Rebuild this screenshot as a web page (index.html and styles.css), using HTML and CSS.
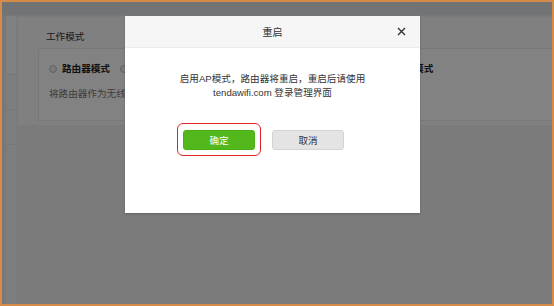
FILE: index.html
```html
<!DOCTYPE html>
<html lang="zh-CN">
<head>
    <meta charset="UTF-8">
    <meta name="viewport" content="width=device-width, initial-scale=1.0">
    <title>工作模式</title>
    <link rel="stylesheet" href="styles.css">
</head>
<body>

    <div class="marco">
        <div class="cabecera"></div>
        <div class="cuerpo">
            <aside class="menu">
                <div class="menu-item activo"></div>
                <div class="menu-item"></div>
                <div class="menu-item"></div>
            </aside>
            <main class="contenido">
                <section class="tarjeta">
                    <h2 class="tarjeta-titulo">工作模式</h2>
                    <div class="modos">
                        <div class="opciones">
                            <label class="opcion"><span class="radio"></span>路由器模式</label>
                            <label class="opcion"><span class="radio"></span>无线中继模式</label>
                            <label class="opcion"><span class="radio"></span>无线AP模式</label>
                        </div>
                        <p class="descripcion">将路由器作为无线AP使用</p>
                    </div>
                </section>
            </main>
        </div>

        <div class="mascara"></div>

        <div class="dialogo">
            <div class="dialogo-cabecera">
                <span class="dialogo-titulo">重启</span>
                <button class="cerrar" aria-label="关闭">
                    <svg width="9" height="9" viewBox="0 0 9 9">
                        <path d="M1 1 L8 8 M8 1 L1 8" stroke="#333" stroke-width="1.4" fill="none"/>
                    </svg>
                </button>
            </div>
            <div class="dialogo-cuerpo">
                <p class="mensaje">启用AP模式，路由器将重启，重启后请使用<br>tendawifi.com 登录管理界面</p>
                <div class="acciones">
                    <span class="resaltado">
                        <button class="boton confirmar">确定</button>
                    </span>
                    <button class="boton cancelar">取消</button>
                </div>
            </div>
        </div>
    </div>

</body>
</html>
```

FILE: styles.css
```css
body {
    margin: 0;
    font-family: "Liberation Sans", Arial, "Noto Sans CJK SC", sans-serif;
    font-size: 9.6px;
    color: #333;
}

.marco {
    position: relative;
    width: 554px;
    height: 306px;
    box-sizing: border-box;
    border: 2px solid #d58c48;
    background-color: #ececec;
    overflow: hidden;
}

.cabecera {
    height: 13px;
    background-color: #dadcde;
    border-bottom: 1px solid #e4e4e4;
}

.cuerpo {
    display: flex;
    height: calc(100% - 14px);
}

.menu {
    width: 10px;
    background-color: #eef2f6;
    border-left: 4px solid #e6e6e6;
}

.menu-item {
    height: 34px;
    border-bottom: 1px solid #e0e4e8;
}

.menu-item.activo {
    height: 58px;
    background-color: #f4f7fa;
}

.contenido {
    flex: 1;
    padding: 1px 0 0 2px;
}

.tarjeta {
    background-color: #f5f5f5;
    padding: 0 0 4px 20px;
}

.tarjeta-titulo {
    margin: 0;
    padding: 14px 0 0 8px;
    height: 17px;
    font-size: 9.6px;
    font-weight: normal;
    line-height: 12px;
    color: #333;
}

.modos {
    background-color: #fafafa;
    border: 1px solid #e6e6e6;
    border-right: none;
    height: 73px;
    padding: 0 0 0 10px;
    box-sizing: border-box;
}

.opciones {
    display: flex;
    gap: 10px;
    padding-top: 14px;
    height: 12px;
    line-height: 12px;
    white-space: nowrap;
}

.opcion {
    display: flex;
    align-items: center;
    gap: 5px;
    color: #222;
    font-weight: bold;
}

.opcion:nth-child(3) {
    margin-left: 168px;
}

.radio {
    width: 6px;
    height: 6px;
    border-radius: 50%;
    border: 1px solid #bbb;
    background-color: #e8e8e8;
}

.descripcion {
    margin: 13px 0 0 0;
    line-height: 12px;
    color: #777;
}

.mascara {
    position: absolute;
    inset: 0;
    background-color: rgba(0, 0, 0, 0.48);
}

.dialogo {
    position: absolute;
    left: 123px;
    top: 14px;
    width: 295px;
    height: 197px;
    background-color: #fff;
    box-shadow: 0 1px 2px rgba(0, 0, 0, 0.2);
}

.dialogo-cabecera {
    position: relative;
    height: 31px;
    background-color: #f6f6f6;
    border-bottom: 1px solid #ececec;
    display: flex;
    justify-content: center;
    align-items: center;
}

.dialogo-titulo {
    font-size: 10px;
    color: #333;
}

.cerrar {
    position: absolute;
    right: 14px;
    top: 11px;
    padding: 0;
    border: none;
    background: none;
    width: 9px;
    height: 9px;
    display: flex;
}

.dialogo-cuerpo {
    padding-top: 24px;
}

.mensaje {
    margin: 0;
    text-align: center;
    line-height: 14px;
    color: #333;
}

.acciones {
    display: flex;
    justify-content: center;
    gap: 17px;
    margin-top: 30px;
    padding-right: 18px;
}

.resaltado {
    position: relative;
    display: flex;
}

.resaltado::after {
    content: "";
    position: absolute;
    left: -6px;
    right: -6px;
    top: -7px;
    bottom: -6px;
    border: 1.5px solid #e0242a;
    border-radius: 6px;
}

.boton {
    width: 72px;
    height: 20px;
    border-radius: 3px;
    font-family: "Liberation Sans", Arial, "Noto Sans CJK SC", sans-serif;
    font-size: 9.6px;
    padding: 0;
    cursor: pointer;
}

.confirmar {
    background-color: #52b81c;
    border: 1px solid #4aaf16;
    color: #fff;
}

.cancelar {
    background-color: #e4e4e4;
    border: 1px solid #d4d4d4;
    color: #333;
}
```
